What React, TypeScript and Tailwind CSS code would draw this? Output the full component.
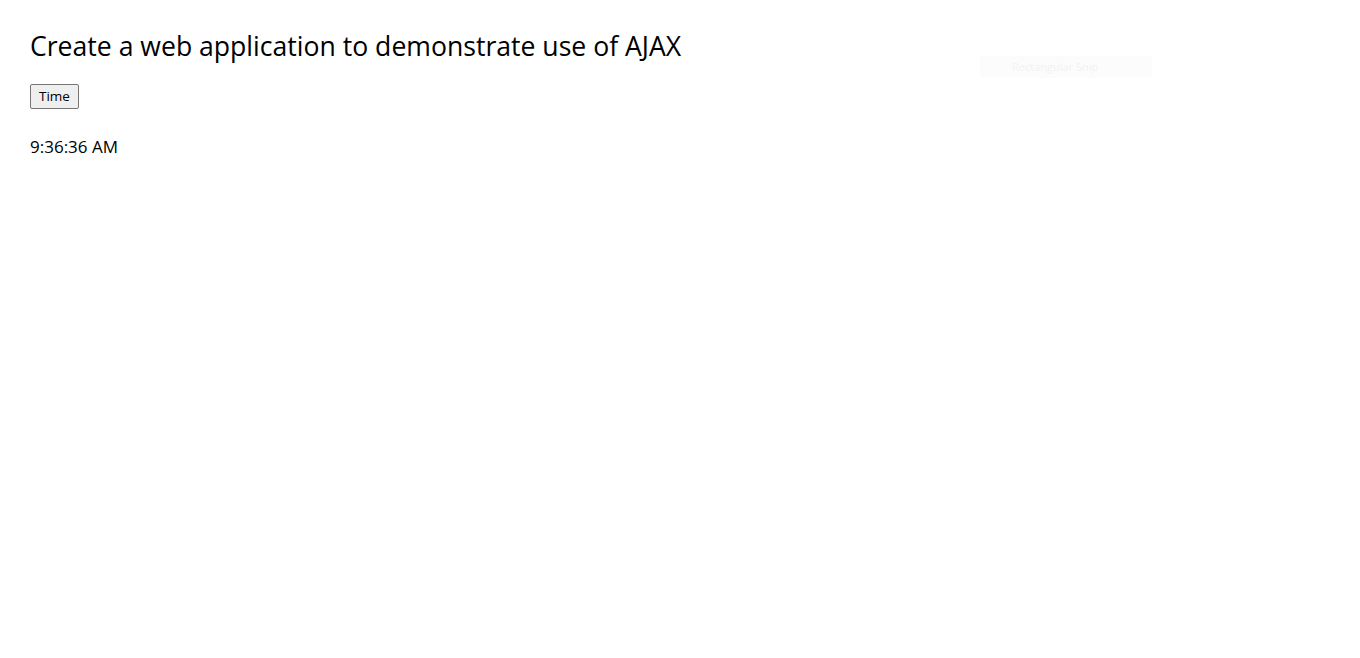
export default function App() {
  return (
    <div className="relative min-h-[658px] bg-white px-[30px] pt-[30px] text-black">
      <h2 className="font-['Open_Sans',sans-serif] text-[26.6px] leading-[32px] font-normal">
        Create a web application to demonstrate use of AJAX
      </h2>
      <button className="mt-[22px] h-[25px] rounded-[2px] border border-[#767676] bg-[#efefef] px-[8px] font-['Open_Sans',sans-serif] text-[13.5px] leading-[23px] text-black">
        Time
      </button>
      <p className="mt-[26px] font-['Open_Sans',sans-serif] text-[17px] leading-[24px]">9:36:36 AM</p>
      <div className="absolute left-[980px] top-[56px] flex h-[22px] w-[172px] items-center bg-[#fcfcfd] pl-[32px] font-['Open_Sans',sans-serif] text-[11px] text-[#f2f2f4]">
        Rectangular Snip
      </div>
    </div>
  );
}
